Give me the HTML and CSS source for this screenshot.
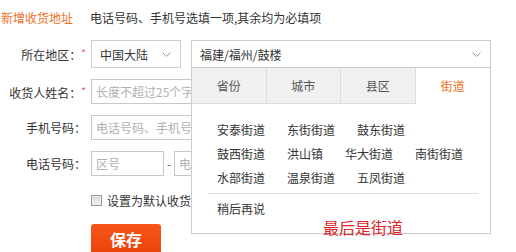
FILE: index.html
```html
<!DOCTYPE html>
<html lang="zh-CN">
<head>
<meta charset="utf-8">
<title>新增收货地址</title>
<link rel="stylesheet" href="styles.css">
</head>
<body>
<div class="page">
  <div class="header">
    <span class="title">新增收货地址</span>
    <span class="note">电话号码、手机号选填一项,其余均为必填项</span>
  </div>
  <div class="form">
    <div class="row row-tall">
      <div class="label">所在地区：<span class="req">*</span></div>
      <div class="select country">
        <span>中国大陆</span>
        <svg class="chev" width="9" height="5" viewBox="0 0 9 5"><path d="M0.5 0.5 L4.5 4.5 L8.5 0.5" fill="none" stroke="#999" stroke-width="1"/></svg>
      </div>
      <div class="region">
        <div class="select region-box">
          <span>福建/福州/鼓楼</span>
          <svg class="chev" width="9" height="5" viewBox="0 0 9 5"><path d="M0.5 0.5 L4.5 4.5 L8.5 0.5" fill="none" stroke="#999" stroke-width="1"/></svg>
        </div>
        <div class="panel">
          <div class="tabs">
            <div class="tab">省份</div>
            <div class="tab">城市</div>
            <div class="tab">县区</div>
            <div class="tab active">街道</div>
          </div>
          <div class="streets">
            <div class="line"><span>安泰街道</span><span>东街街道</span><span>鼓东街道</span></div>
            <div class="line"><span>鼓西街道</span><span>洪山镇</span><span>华大街道</span><span>南街街道</span></div>
            <div class="line"><span>水部街道</span><span>温泉街道</span><span>五凤街道</span></div>
          </div>
          <div class="sep"></div>
          <div class="later">稍后再说</div>
        </div>
      </div>
    </div>
    <div class="row">
      <div class="label">收货人姓名：<span class="req">*</span></div>
      <input class="input wide" type="text" placeholder="长度不超过25个字">
    </div>
    <div class="row">
      <div class="label">手机号码：</div>
      <input class="input wide" type="text" placeholder="电话号码、手机号码必须填一项">
    </div>
    <div class="row">
      <div class="label">电话号码：</div>
      <input class="input area" type="text" placeholder="区号">
      <span class="dash">-</span>
      <input class="input tel" type="text" placeholder="电话号码">
    </div>
    <div class="row row-check">
      <span class="checkbox"></span>
      <span class="check-text">设置为默认收货地址</span>
    </div>
    <div class="row row-btn">
      <button class="save" type="button">保存</button>
    </div>
  </div>
  <div class="annot">最后是街道</div>
</div>
</body>
</html>
```
FILE: styles.css
```css
* { box-sizing: border-box; }
html, body { margin: 0; padding: 0; background: #fff; }
body {
  font-family: "Noto Sans CJK SC", "Noto Sans", sans-serif;
  font-size: 12px;
  color: #333;
}
.page {
  position: relative;
  width: 516px;
  height: 252px;
  overflow: hidden;
}
.header {
  height: 34px;
  display: flex;
  align-items: center;
  padding-left: 1px;
}
.title { color: #f0701e; }
.note { margin-left: 17px; color: #333; }

.form {
  margin-top: 6px;
  display: flex;
  flex-direction: column;
  gap: 11px;
}
.row {
  display: flex;
  align-items: center;
  height: 25px;
}
.row-tall { height: 28px; }
.label {
  flex: none;
  width: 86px;
  margin-right: 5px;
  text-align: right;
  white-space: nowrap;
  color: #333;
}
.req {
  color: #e8555a;
  font-size: 10px;
  vertical-align: 3px;
}
.select {
  display: flex;
  align-items: center;
  justify-content: space-between;
  height: 28px;
  border: 1px solid #ccc;
  background: #fff;
  color: #333;
}
.country {
  width: 90px;
  padding: 0 9px 0 8px;
}
.region {
  position: relative;
  margin-left: 10px;
  width: 300px;
}
.region-box {
  width: 300px;
  padding: 0 9px 0 8px;
}
.chev { display: block; }
.panel {
  position: absolute;
  top: 28px;
  left: 0;
  width: 300px;
  height: 166px;
  border: 1px solid #ccc;
  border-top: 0;
  background: #fff;
  z-index: 2;
}
.tabs {
  display: grid;
  grid-template-columns: repeat(4, 1fr);
  height: 36px;
}
.tab {
  background: #f0f0f0;
  border-right: 1px solid #dcdcdc;
  border-bottom: 1px solid #dcdcdc;
  color: #555;
  text-align: center;
  line-height: 35px;
}
.tab.active {
  background: #fff;
  border-right: 0;
  border-bottom: 0;
  color: #f0701e;
}
.streets {
  padding: 14px 0 0 25px;
}
.line {
  display: flex;
  gap: 22px;
  line-height: 24px;
  white-space: nowrap;
}
.sep {
  margin: 3px 12px 0 16px;
  border-top: 1px solid #ddd;
}
.later {
  margin-top: 3px;
  padding-left: 25px;
  line-height: 24px;
}

.input {
  height: 25px;
  border: 1px solid #c8c8c8;
  padding: 0 4px;
  font-family: inherit;
  font-size: 12px;
  color: #333;
  outline: none;
  background: #fff;
}
.input::placeholder { color: #b0b0b0; }
.wide { width: 200px; }
.area { width: 73px; }
.dash {
  width: 10px;
  text-align: center;
  color: #666;
}
.tel { width: 100px; }

.row-check {
  height: 20px;
  margin-top: 3px;
  padding-left: 91px;
}
.checkbox {
  width: 11px;
  height: 11px;
  border: 1px solid #9a9a9a;
  background: linear-gradient(#d6d6d6, #f2f2f2);
  box-shadow: inset 0 0 0 1px #eee;
  margin-right: 5px;
}
.check-text { color: #333; }

.row-btn {
  height: 30px;
  margin-top: 3px;
  padding-left: 91px;
}
.save {
  width: 70px;
  height: 30px;
  border: 0;
  border-radius: 3px;
  background: linear-gradient(#f5561a, #ec4309);
  color: #fff;
  font-family: inherit;
  font-size: 16px;
  font-weight: bold;
  padding: 0;
}

.annot {
  position: absolute;
  left: 323px;
  top: 217px;
  font-size: 16px;
  line-height: 20px;
  color: #e0242b;
  z-index: 3;
}
```
